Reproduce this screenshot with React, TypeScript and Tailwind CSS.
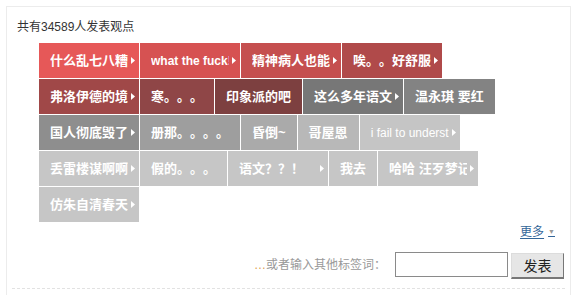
import React from 'react';

type Tag = { text: string; bg: string; more?: boolean; latin?: boolean; thin?: boolean };

// rows are fixed, the original list is cut at 100px and gets a ▸ when it overflows
const ROWS: Tag[][] = [
  [
    { text: '什么乱七八糟的东西', bg: 'bg-[#e65858]', more: true },
    { text: 'what the fuck!!!', bg: 'bg-[#d65252]', more: true, latin: true },
    { text: '精神病人也能写书', bg: 'bg-[#c54f4f]', more: true },
    { text: '唉。。好舒服啊', bg: 'bg-[#b04a4a]', more: true },
  ],
  [
    { text: '弗洛伊德的境界', bg: 'bg-[#a04848]', more: true },
    { text: '寒。。。', bg: 'bg-[#8f4647]' },
    { text: '印象派的吧', bg: 'bg-[#7d4040]' },
    { text: '这么多年语文白学了', bg: 'bg-[#777777]', more: true },
    { text: '温永琪 要红', bg: 'bg-[#838383]' },
  ],
  [
    { text: '国人彻底毁了啊', bg: 'bg-[#8e8e8e]', more: true },
    { text: '册那。。。。', bg: 'bg-[#9e9e9e]' },
    { text: '昏倒~', bg: 'bg-[#aaaaaa]' },
    { text: '哥屋恩', bg: 'bg-[#b8b8b8]' },
    { text: 'i fail to understand', bg: 'bg-[#c5c5c5]', more: true, latin: true, thin: true },
  ],
  [
    { text: '丢雷楼谋啊啊啊', bg: 'bg-[#c6c6c6]', more: true },
    { text: '假的。。。', bg: 'bg-[#c6c6c6]' },
    { text: '语文？？！', bg: 'bg-[#c6c6c6]', more: true },
    { text: '我去', bg: 'bg-[#c6c6c6]' },
    { text: '哈哈 汪歹梦记了', bg: 'bg-[#c6c6c6]', more: true },
  ],
  [{ text: '仿朱自清春天的', bg: 'bg-[#c6c6c6]', more: true }],
];

const Arrow = () => (
  <svg width="4" height="7" viewBox="0 0 4 7" className="ml-[3px] shrink-0">
    <polygon points="0,0 4,3.5 0,7" fill="#fff" />
  </svg>
);

const TagChip = ({ tag }: { tag: Tag }) => {
  const size = tag.latin ? 'text-[12px]' : 'text-[13px]';
  const weight = tag.thin ? 'font-normal' : 'font-bold';
  return tag.more ? (
    <a className={`flex h-[35px] w-[100px] items-center pl-[11px] ${tag.bg}`}>
      <span className={`w-[78px] shrink-0 overflow-hidden whitespace-nowrap text-white ${size} ${weight}`}>
        {tag.text}
      </span>
      <Arrow />
    </a>
  ) : (
    <a className={`flex h-[35px] items-center whitespace-nowrap px-[11px] text-white ${size} ${weight} ${tag.bg}`}>
      {tag.text}
    </a>
  );
};

export default function App() {
  return (
    <div
      className="min-h-[295px] bg-white pl-[6px] pt-[6px] [text-spacing-trim:space-all]"
      style={{ fontFamily: '"Liberation Sans", "Noto Sans CJK SC", sans-serif' }}
    >
      <div className="h-[300px] w-[565px] border border-b-0 border-[#ececec]">
        <p className="pl-[10px] pt-[11px] text-[12px] leading-[18px] text-[#333]">共有34589人发表观点</p>

        <div className="ml-[32px] mt-[7px] flex flex-col gap-px">
          {ROWS.map((row, i) => (
            <div key={i} className="flex gap-px">
              {row.map((t) => (
                <TagChip key={t.text} tag={t} />
              ))}
            </div>
          ))}
        </div>

        <div className="mt-[2px] flex justify-end pr-[15px]">
          <a className="flex items-center text-[12px] leading-[16px] text-[#336699] underline underline-offset-2">
            更多
            <span className="ml-[4px] text-[7px] text-[#999]">▼</span>
          </a>
        </div>

        <div className="mt-[12px] flex items-start justify-end pr-[6px]">
          <span className="mt-[5px] text-[12px] leading-[16px] text-[#999]">
            <span className="text-[#e0a050]">…</span>或者输入其他标签词：
          </span>
          <input
            type="text"
            className="ml-[9px] h-[25px] w-[113px] border border-[#8a8a8a] bg-white px-1 text-[12px] outline-none"
          />
          <button className="ml-[3px] mt-px h-[26px] w-[53px] border border-b-2 border-[#dcdcdc] border-b-[#777] border-r-[#777] bg-[#e6e6e6] text-[14px] leading-none text-[#222]">
            发表
          </button>
        </div>

        <div className="mx-[5px] mt-[9px] border-t border-dashed border-[#e2e2e2]" />
      </div>
    </div>
  );
}
